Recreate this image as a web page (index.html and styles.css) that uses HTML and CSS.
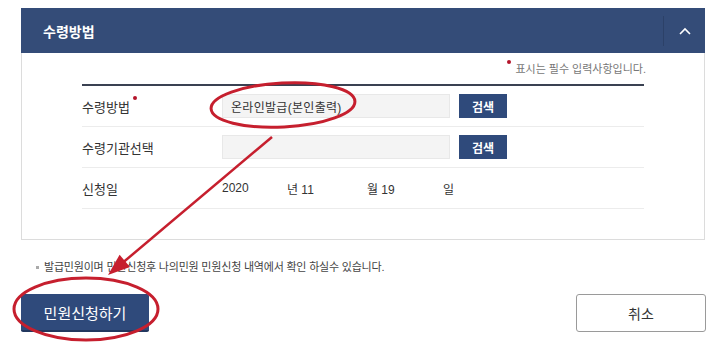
FILE: index.html
```html
<!DOCTYPE html>
<html lang="ko">
<head>
  <meta charset="UTF-8">
  <meta name="viewport" content="width=device-width, initial-scale=1.0">
  <title>수령방법</title>
  <link rel="stylesheet" href="styles.css">
</head>
<body>
  <div class="panel">
    <div class="panel-head">
      <h2>수령방법</h2>
      <button class="toggle" aria-label="접기">
        <svg width="12" height="8" viewBox="0 0 12 8"><path d="M1 7 L6 2 L11 7" fill="none" stroke="#fff" stroke-width="1.6"/></svg>
      </button>
    </div>
    <div class="panel-body">
      <p class="req-note"><span class="req"></span>표시는 필수 입력사항입니다.</p>
      <div class="form-table">
        <div class="row">
          <div class="label">수령방법<span class="req"></span></div>
          <div class="field">
            <input type="text" value="온라인발급(본인출력)" readonly>
            <button class="btn-search">검색</button>
          </div>
        </div>
        <div class="row">
          <div class="label">수령기관선택</div>
          <div class="field">
            <input type="text" readonly>
            <button class="btn-search">검색</button>
          </div>
        </div>
        <div class="row">
          <div class="label">신청일</div>
          <div class="field date">
            <span class="d-year">2020</span>
            <span class="d-month">년 11</span>
            <span class="d-day">월 19</span>
            <span>일</span>
          </div>
        </div>
      </div>
    </div>
  </div>

  <p class="notice">발급민원이며 민원신청후 나의민원 민원신청 내역에서 확인 하실수 있습니다.</p>

  <div class="actions">
    <button class="btn-primary">민원신청하기</button>
    <button class="btn-cancel">취소</button>
  </div>

  <svg class="marks" width="720" height="352" viewBox="0 0 720 352">
    <ellipse cx="283" cy="105" rx="72" ry="22" transform="rotate(-3 283 105)" fill="none" stroke="#c61f2e" stroke-width="3"/>
    <ellipse cx="86" cy="309" rx="72" ry="31" fill="none" stroke="#c61f2e" stroke-width="3"/>
    <line x1="272" y1="137" x2="120" y2="265" stroke="#c61f2e" stroke-width="2.5"/>
    <polygon points="108,275 130,267 119.6,254.7" fill="#c61f2e"/>
  </svg>
</body>
</html>
```

FILE: styles.css
```css
body {
  margin: 0;
  position: relative;
  width: 720px;
  height: 352px;
  overflow: hidden;
  background: #fff;
  color: #333;
  font-family: "Liberation Sans", "Noto Sans CJK KR", sans-serif;
}
.panel {
  margin: 8px 15px 0 21px;
  border: 1px solid #dcdcdc;
  border-top: none;
}
.panel-head {
  height: 45px;
  margin: 0 -1px;
  background: #344c78;
  display: flex;
  align-items: center;
  justify-content: space-between;
}
.panel-head h2 {
  margin: 0 0 0 22px;
  color: #fff;
  font-size: 14px;
  font-weight: bold;
}
.toggle {
  width: 42px;
  height: 30px;
  padding: 0;
  background: none;
  border: none;
  border-left: 1px solid #2c4168;
  display: flex;
  align-items: center;
  justify-content: center;
}
.panel-body {
  padding: 9px 58px 30px 60px;
}
.req-note {
  margin: 0;
  text-align: right;
  font-size: 11px;
  line-height: 14px;
  color: #777;
}
.req {
  display: inline-block;
  width: 4px;
  height: 4px;
  border-radius: 50%;
  background: #b4142a;
  vertical-align: top;
  margin: -1px 4px 0 3px;
}
.req-note .req {
  margin: -2px 4px 0 0;
}
.form-table {
  margin: 8px 2px 0 0;
  border-top: 2px solid #3a4152;
}
.row {
  height: 40px;
  display: flex;
  align-items: center;
  border-bottom: 1px solid #ececec;
}
.label {
  width: 140px;
  font-size: 13px;
  color: #333;
}
.field {
  display: flex;
  align-items: center;
}
.field input {
  width: 228px;
  height: 24px;
  box-sizing: border-box;
  padding: 0 8px;
  border: 1px solid #e8e8e8;
  background: #f4f4f4;
  font-family: inherit;
  font-size: 12px;
  letter-spacing: 0.3px;
  color: #333;
}
.btn-search {
  margin-left: 9px;
  width: 48px;
  height: 24px;
  padding: 0;
  border: none;
  background: #2f4a7b;
  color: #fff;
  font-family: inherit;
  font-size: 12px;
  font-weight: bold;
}
.date {
  font-size: 12px;
  color: #333;
}
.d-year { width: 65px; }
.d-month { width: 80px; }
.d-day { width: 76px; }
.notice {
  margin: 19px 0 0 36px;
  font-size: 11px;
  line-height: 16px;
  letter-spacing: -0.2px;
  color: #444;
}
.notice::before {
  content: "";
  display: inline-block;
  width: 3px;
  height: 3px;
  background: #aaa;
  vertical-align: middle;
  margin: 0 5px 2px 0;
}
.actions {
  margin: 19px 14px 0 21px;
  display: flex;
  justify-content: space-between;
}
.btn-primary {
  width: 128px;
  height: 38px;
  border: none;
  border-radius: 2px;
  border-bottom: 2px solid #22385f;
  background: #2f4a7b;
  color: #fff;
  font-family: inherit;
  font-size: 15px;
}
.btn-cancel {
  width: 130px;
  height: 38px;
  border: 1px solid #9a9a9a;
  border-radius: 3px;
  background: #fff;
  color: #333;
  font-family: inherit;
  font-size: 14px;
}
.marks {
  position: absolute;
  left: 0;
  top: 0;
  pointer-events: none;
}
```
